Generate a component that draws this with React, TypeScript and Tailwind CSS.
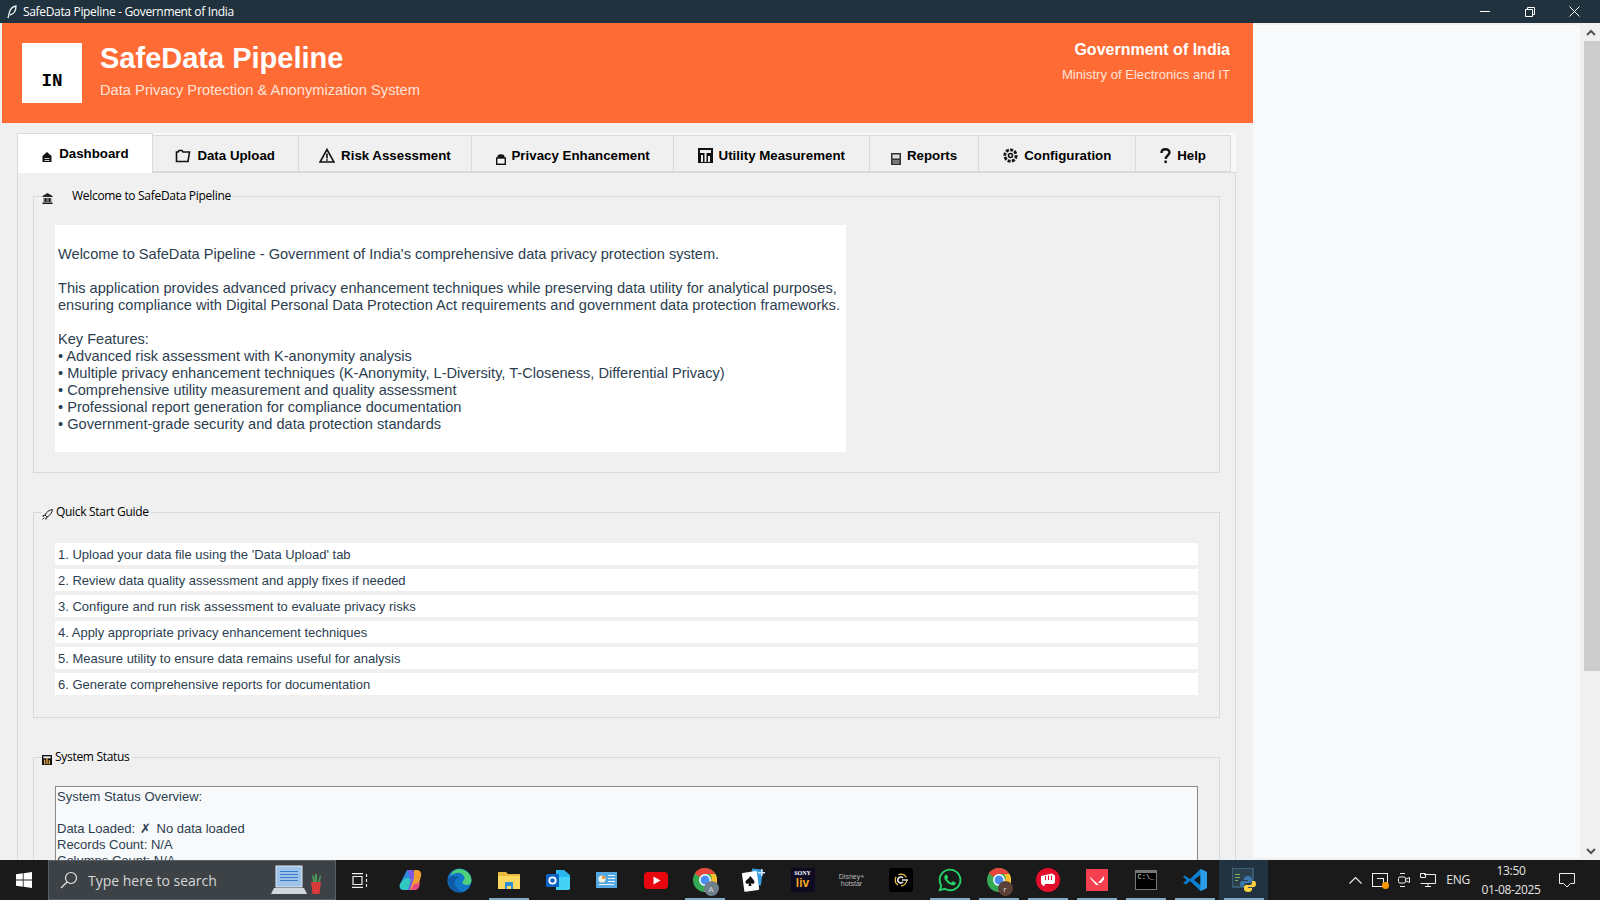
import React from "react";
import { FaWhatsapp } from "react-icons/fa";

const sans = "font-['Liberation_Sans',Arial,sans-serif]";

const HomeIcon = () => (
  <svg width="12" height="12" viewBox="0 0 12 12" className="mt-[7px]">
    <path d="M6 1 1.500 5v6h9V5z" fill="#111" />
    <path d="M3.500 7h5v1h-5zM3.500 9h5v1h-5z" fill="#ccc" />
  </svg>
);
const FolderIcon = () => (
  <svg width="16" height="14" viewBox="0 0 16 14" fill="none" stroke="#111" strokeWidth="1.600">
    <path d="M1.500 12.500V3h1.500l1-1.500h3L8 3h6.500l-1.500 9.500z" fill="#eee" />
  </svg>
);
const WarnIcon = () => (
  <svg width="16" height="15" viewBox="0 0 16 15" fill="none">
    <path d="M8 1.500 1 14h14z" stroke="#111" strokeWidth="1.600" />
    <path d="M7.200 5.500h1.600v5H7.200zM7.200 11.300h1.600v1.400H7.200z" fill="#111" />
  </svg>
);
const LockIcon = () => (
  <svg width="10" height="11" viewBox="0 0 10 11" className="mt-[7px]">
    <path d="M1.500 5V2.500C1.500 1 3 .3 5 .3s3.500.7 3.500 2.200V5z" fill="#111" />
    <rect x=".7" y="4" width="8.600" height="6.300" fill="#f4f4f4" stroke="#111" strokeWidth="1.400" />
  </svg>
);
const BarsIcon = ({ size = 15, bars = "#eee" }: { size?: number; bars?: string }) => (
  <svg width={size} height={size} viewBox="0 0 15 15">
    <rect width="15" height="15" fill="#111" />
    <path d="M2 2h11v3H2z" fill="#eee" />
    <path d="M3 7h2v7H3zM6.500 5h2v9h-2zM10 8h2v6h-2z" fill={bars} />
  </svg>
);
const ReportIcon = () => (
  <svg width="10" height="12" viewBox="0 0 10 12" className="mt-[6px]">
    <rect width="10" height="12" fill="#333" />
    <rect x="1.500" y="1.500" width="7" height="4" fill="#ddd" />
    <rect x="1.500" y="7" width="7" height="4" fill="#777" />
  </svg>
);
const GearIcon = () => (
  <svg width="15" height="15" viewBox="0 0 15 15" fill="none" stroke="#111">
    <circle cx="7.500" cy="7.500" r="5.700" strokeWidth="2.800" strokeDasharray="3 1.300" />
    <circle cx="7.500" cy="7.500" r="2" strokeWidth="1.600" />
  </svg>
);
const QuestionIcon = () => (
  <svg width="11" height="16" viewBox="0 0 11 16" fill="none" stroke="#111" strokeWidth="2.400">
    <path d="M1.500 5C1.500 2.500 3 1.200 5.500 1.200S9.500 2.600 9.500 4.600c0 2.600-3.500 3-3.800 6.200" />
    <path d="M5.600 12.500v2.600" />
  </svg>
);
const BankIcon = () => (
  <svg width="11" height="11" viewBox="0 0 11 11">
    <path d="M5.500 0 .5 3v1h10V3z" fill="#222" />
    <path d="M1.500 5h8v4h-8z" fill="#666" />
    <path d="M3 5h1v4H3zM7 5h1v4H7zM.5 9.500h10V11H.5z" fill="#111" />
  </svg>
);
const RocketIcon = () => (
  <svg width="11" height="11" viewBox="0 0 11 11" fill="none">
    <path d="M10.500.5C7 1 4.500 3 3 6l2 2c3-1.500 5-4 5.500-7.500z" fill="#eee" stroke="#222" />
    <path d="M3 6 .7 7l1 .7M5 8l-1 2.300-.7-1M2.300 8.700.5 10.500" stroke="#222" />
  </svg>
);

function Tab({ icon, label, width, active }: { icon: React.ReactNode; label: string; width: string; active?: boolean }) {
  return (
    <div
      className={
        active
          ? `${width} h-[40px] flex justify-center items-start gap-[6px] pt-[10px] bg-white border border-b-0 border-[#d9d9d9] text-[13.3px] font-bold text-black`
          : `${width} h-[37px] mt-[2px] pt-[4px] flex justify-center items-center gap-[6px] bg-[#f0f0f0] border-r border-t border-b border-[#d9d9d9] text-[13.3px] font-bold text-black`
      }
    >
      {icon}
      <span>{label}</span>
    </div>
  );
}

function Frame({ icon, title, titleLeft, children, className }: { icon: React.ReactNode; title: string; titleLeft: string; children: React.ReactNode; className: string }) {
  return (
    <section className={`relative border border-[#d9d9d9] ${className}`}>
      <div className="absolute -top-[10px] left-[8px] h-[18px] flex items-center bg-[#f0f0f0] font-['Open_Sans',sans-serif] text-[12px] text-black tracking-[-0.3px] pr-[2px]">
        <span className="pr-[3px] mt-[5px]">{icon}</span>
        <span className={titleLeft}>{title}</span>
      </div>
      {children}
    </section>
  );
}

const guide = [
  "1. Upload your data file using the 'Data Upload' tab",
  "2. Review data quality assessment and apply fixes if needed",
  "3. Configure and run risk assessment to evaluate privacy risks",
  "4. Apply appropriate privacy enhancement techniques",
  "5. Measure utility to ensure data remains useful for analysis",
  "6. Generate comprehensive reports for documentation",
];

const Copilot = () => (
  <svg width="24" height="24" viewBox="0 0 24 24">
    <path d="M8 2h5l-4 20H4C1 22 0 19 1 16z" fill="#2f8be0" />
    <path d="M8 2h6l3 4-5 16H8l3-14z" fill="#7c5be0" />
    <path d="M15 2h3c3 0 5 3 4 6l-3 11c-1 2-3 3-5 3h-3l4-12z" fill="#f0a030" />
    <path d="M12 22h4c2 0 3-1 4-3l1-4-6 1z" fill="#e84a7f" />
    <path d="M5 11c3-2 6-1 7 1l-3 10H5c-3 0-5-3-4-6z" fill="#2fc7c0" />
  </svg>
);
const Edge = () => (
  <svg width="25" height="25" viewBox="0 0 25 25">
    <circle cx="12.500" cy="12.500" r="12" fill="#1277c9" />
    <path d="M12 1c6 0 12 4 12.500 11 0 3-2 5-5 5-2 0-4-1-4-2.500C15.500 12 20 12 16 7 14 4 8 4 3 8c2-4 5-7 9-7z" fill="#4fd07a" />
    <path d="M1 11c2-3 8-5 11-1-3 0-5 3-4 7 1 3 4 6 8 7-8 2-15-5-15-13z" fill="#0e5aa5" />
  </svg>
);
const Explorer = () => (
  <svg width="22" height="20" viewBox="0 0 22 20">
    <path d="M0 2h8l2 2h12v15H0z" fill="#e9b83e" />
    <path d="M0 6h22v13H0z" fill="#fbd95f" />
    <path d="M7 12h8v7h-2v-3H9v3H7z" fill="#2e8fd8" />
  </svg>
);
const Outlook = () => (
  <svg width="24" height="22" viewBox="0 0 24 22">
    <path d="M10 1h8l6 5v13c0 1-1 2-2 2H10z" fill="#29b6ef" />
    <path d="M10 8h14v11c0 1-1 2-2 2H10z" fill="#43d2f5" />
    <rect y="5" width="13" height="13" rx="1" fill="#0c62c4" />
    <circle cx="6.500" cy="11.500" r="3.200" fill="none" stroke="#fff" strokeWidth="1.800" />
  </svg>
);
const Widget = () => (
  <svg width="21" height="16" viewBox="0 0 21 16">
    <rect width="21" height="16" fill="#56a8e0" />
    <circle cx="6" cy="7" r="3.500" fill="#f4f4e4" />
    <path d="M6 7V3.500A3.500 3.500 0 0 1 9.500 7z" fill="#e89a3a" />
    <path d="M12 3h7v1h-7zM12 6h7v1h-7zM12 9h7v1h-7zM3 12h15v1H3z" fill="#e8f4ff" />
  </svg>
);
const Youtube = () => (
  <svg width="24" height="17" viewBox="0 0 24 17">
    <rect width="24" height="17" rx="4" fill="#e8070f" />
    <path d="M9.500 4.500 16.500 8.500 9.500 12.500z" fill="#fff" />
  </svg>
);
const Chrome = ({ badge, badgeBg }: { badge: string; badgeBg: string }) => (
  <span className="relative block w-[24px] h-[24px]">
    <svg width="24" height="24" viewBox="0 0 24 24">
      <circle cx="12" cy="12" r="12" fill="#34a853" />
      <path d="M12 0a12 12 0 0 1 10.400 6H12a6 6 0 0 0-5.200 3L1.800 5.500A12 12 0 0 1 12 0z" fill="#e8453c" />
      <path d="M22.400 6A12 12 0 0 1 11 24l5.200-9A6 6 0 0 0 17 6z" fill="#fbc02d" />
      <circle cx="12" cy="12" r="5.200" fill="#4a8df0" stroke="#fff" strokeWidth="1.500" />
    </svg>
    <span className={`absolute -right-[2px] -bottom-[4px] w-[15px] h-[15px] rounded-full ${badgeBg} text-[8px] leading-[15px] text-center text-[#ddd] font-['Open_Sans',sans-serif]`}>{badge}</span>
  </span>
);
const Solitaire = () => (
  <svg width="23" height="24" viewBox="0 0 23 24">
    <rect x="9" y="1" width="11" height="16" rx="1" transform="rotate(8 14 9)" fill="#3b9be0" />
    <path d="M19 1h1.500v3H23v1.500h-2.500V8H19V5.500h-3V4h3z" fill="#cfe8ff" />
    <rect x="1" y="4" width="15" height="19" rx="1" transform="rotate(-8 8 13)" fill="#fff" />
    <path d="M8.500 8c2 3 4 4 4 6 0 2-2.500 2.500-3.500 1l.5 3h-3l.5-3c-1 1.500-3.500 1-3.500-1 0-2 3-3 5-6z" fill="#111" />
  </svg>
);
const Sony = () => (
  <span className="flex flex-col items-center w-[24px] h-[24px] bg-[#0d0a22] pt-[2px]">
    <span className="font-['Liberation_Serif',serif] font-bold text-[6px] leading-[7px] text-white">SONY</span>
    <span className="font-['Liberation_Sans',sans-serif] font-bold text-[12px] leading-[13px] text-[#f5a623]">liv</span>
  </span>
);
const Disney = () => (
  <span className="flex flex-col items-center w-[24px] font-['Liberation_Sans',sans-serif] text-[7px] leading-[7px] text-[#b8b8b8]">
    <span>Disney+</span>
    <span>hotstar</span>
  </span>
);
const CApp = () => (
  <span className="flex items-center justify-center w-[24px] h-[24px] rounded-[3px] bg-black">
    <svg width="14" height="14" viewBox="0 0 14 14" fill="none">
      <circle cx="7" cy="7" r="5.800" stroke="#e8c34a" strokeWidth="1.200" strokeDasharray="9 3" />
      <path d="M9 5a3 3 0 1 0 0 4" stroke="#eee" strokeWidth="1.600" />
      <path d="M8 7h6" stroke="#eee" strokeWidth="1.400" />
    </svg>
  </span>
);
const Riot = () => (
  <svg width="24" height="24" viewBox="0 0 24 24">
    <circle cx="12" cy="12" r="12" fill="#e40d2d" />
    <path d="M5 8l11-2.500 3 2V15l-2 1H9l-1 2.500-3-3z" fill="#fff" />
    <path d="M9.500 8v4M12.500 7.500v4.500M15.500 7.500V12" stroke="#e40d2d" strokeWidth="1" />
  </svg>
);
const Valorant = () => (
  <svg width="22" height="22" viewBox="0 0 22 22">
    <rect width="22" height="22" fill="#f5414f" />
    <path d="M4 8v1l6 7h3zM18 7l-6 7h3l3-3.500z" fill="#fff" />
  </svg>
);
const Cmd = () => (
  <span className="block w-[22px] h-[20px] bg-black border border-[#777] border-t-[3px] pl-[2px] text-[7px] leading-[9px] text-[#ddd] font-['Liberation_Mono',monospace]">C:\_</span>
);
const VSCode = () => (
  <svg width="24" height="24" viewBox="0 0 24 24">
    <path d="M17.500 1 24 4v16l-6.500 3L7 13l-4 3.500L0 15l4-3-4-3 1.500-1.500L7 11z" fill="#0a7ed0" />
    <path d="M17.500 7v10L11 12z" fill="#1a1a1a" />
    <path d="M17.500 1 24 4v16l-6.500 3z" fill="#2b9ee8" />
  </svg>
);
const PyIdle = () => (
  <span className="relative block w-[24px] h-[24px]">
    <svg width="22" height="20" viewBox="0 0 22 20" className="absolute left-0 top-0">
      <rect width="21" height="19" fill="#2b3f4d" stroke="#4b7fa0" />
      <path d="M3 6h5v1H3zM3 9h5v1H3zM3 12h3v1H3z" fill="#7ab15a" />
    </svg>
    <svg width="16" height="16" viewBox="0 0 16 16" className="absolute right-0 bottom-0">
      <path d="M8 0c-3 0-4 1-4 3v1h4v1H2C1 5 0 6 0 8s1 3 2 3h2V9c0-1 1-2 2-2h4c1 0 2-1 2-2V3c0-2-2-3-4-3z" fill="#3b78ad" />
      <path d="M8 16c3 0 4-1 4-3v-1H8v-1h6c1 0 2-1 2-3s-1-3-2-3h-2v2c0 1-1 2-2 2H6c-1 0-2 1-2 2v2c0 2 2 3 4 3z" fill="#fdd23e" />
    </svg>
  </span>
);

const taskIcons: { node: React.ReactNode; open?: boolean; active?: boolean }[] = [
  { node: <Copilot /> },
  { node: <Edge /> },
  { node: <Explorer />, open: true },
  { node: <Outlook /> },
  { node: <Widget /> },
  { node: <Youtube /> },
  { node: <Chrome badge="A" badgeBg="bg-[#6f7f8c]" />, open: true },
  { node: <Solitaire /> },
  { node: <Sony /> },
  { node: <Disney /> },
  { node: <CApp /> },
  { node: <FaWhatsapp className="text-[26px] text-[#25d366]" />, open: true },
  { node: <Chrome badge="r" badgeBg="bg-[#5a4038]" />, open: true },
  { node: <Riot />, open: true },
  { node: <Valorant />, open: true },
  { node: <Cmd />, open: true },
  { node: <VSCode />, open: true },
  { node: <PyIdle />, open: true, active: true },
];

export default function App() {
  return (
    <div className={`w-[1600px] h-[900px] flex flex-col overflow-hidden bg-[#f0f0f0] ${sans}`}>
      {/* title bar */}
      <div className="h-[23px] shrink-0 flex items-center bg-[#1f323e] text-white">
        <svg width="10" height="14" viewBox="0 0 10 14" className="ml-[7px] mr-[6px]" fill="none">
          <path d="M1 13 2.500 7C3.500 3.500 6 1.500 9 1c0 4-2 8-6 9" stroke="#e8eef2" strokeWidth="1.300" />
        </svg>
        <span className="font-['Open_Sans',sans-serif] text-[12px] tracking-[-0.33px]">SafeData Pipeline - Government of India</span>
        <div className="ml-auto flex items-center h-full pr-[3px]">
          <div className="w-[45px] flex justify-center">
            <span className="block w-[10px] h-[1px] bg-white" />
          </div>
          <div className="w-[45px] flex justify-center">
            <svg width="10" height="10" viewBox="0 0 10 10" fill="none" stroke="#fff">
              <path d="M.5 2.500h7v7h-7zM2.500 2.500v-2h7v7h-2" />
            </svg>
          </div>
          <div className="w-[45px] flex justify-center">
            <svg width="11" height="11" viewBox="0 0 11 11" stroke="#fff">
              <path d="M.5.5l10 10M10.500.5l-10 10" />
            </svg>
          </div>
        </div>
      </div>

      {/* window body */}
      <div className="flex-1 min-h-0 flex">
        <main className="w-[1253px] shrink-0 overflow-hidden pl-[2px]">
          <header className="h-[100px] bg-[#ff6b35] flex pl-[20px] pr-[23px] pt-[20px] text-white">
            <div className="w-[60px] h-[60px] bg-white flex items-center justify-center pt-[17px] font-['Liberation_Mono',monospace] font-bold text-[17.500px] text-black">IN</div>
            <div className="ml-[18px] -mt-[4px]">
              <div className="text-[29px] leading-[38px] font-bold">SafeData Pipeline</div>
              <div className="text-[14.700px] leading-[20px] mt-[3px] text-[#ffe3d8]">Data Privacy Protection &amp; Anonymization System</div>
            </div>
            <div className="ml-auto text-right">
              <div className="text-[16px] leading-[20px] font-bold -mt-[3px]">Government of India</div>
              <div className="text-[13.100px] leading-[16px] mt-[7px] text-[#ffe3d8]">Ministry of Electronics and IT</div>
            </div>
          </header>

          <div className="ml-[15px] w-[1219px] mt-[10px]">
            <div className="flex h-[40px] bg-[#f8f8f8] pr-[5px]">
              <Tab active width="w-[136px]" icon={<HomeIcon />} label="Dashboard" />
              <Tab width="w-[146px]" icon={<FolderIcon />} label="Data Upload" />
              <Tab width="w-[174px]" icon={<WarnIcon />} label="Risk Assessment" />
              <Tab width="w-[202px]" icon={<LockIcon />} label="Privacy Enhancement" />
              <Tab width="w-[196px]" icon={<BarsIcon />} label="Utility Measurement" />
              <Tab width="w-[110px]" icon={<ReportIcon />} label="Reports" />
              <Tab width="w-[157px]" icon={<GearIcon />} label="Configuration" />
              <Tab width="w-[95px]" icon={<QuestionIcon />} label="Help" />
            </div>
            <div className="h-[700px] -mt-[1px] border border-[#d9d9d9] px-[15px] pt-[23px]">
              <Frame
                className="h-[277px] pl-[21px] pt-[28px]"
                icon={<BankIcon />}
                title="Welcome to SafeData Pipeline"
                titleLeft="ml-[16px]"
              >
                <div className="w-[791px] h-[227px] bg-white px-[3px] pt-[21px] text-[14.600px] leading-[17px] text-[#2c3e50] whitespace-pre">
                  {`Welcome to SafeData Pipeline - Government of India's comprehensive data privacy protection system.

This application provides advanced privacy enhancement techniques while preserving data utility for analytical purposes,
ensuring compliance with Digital Personal Data Protection Act requirements and government data protection frameworks.

Key Features:
• Advanced risk assessment with K-anonymity analysis
• Multiple privacy enhancement techniques (K-Anonymity, L-Diversity, T-Closeness, Differential Privacy)
• Comprehensive utility measurement and quality assessment
• Professional report generation for compliance documentation
• Government-grade security and data protection standards`}
                </div>
              </Frame>

              <Frame
                className="h-[206px] mt-[39px] pl-[21px] pr-[21px] pt-[30px]"
                icon={<RocketIcon />}
                title="Quick Start Guide"
                titleLeft=""
              >
                <div className="flex flex-col gap-[4px]">
                  {guide.map((line) => (
                    <div key={line} className="h-[22px] bg-white pl-[3px] pt-[2px] flex items-center text-[13px] text-[#2c3e50]">
                      {line}
                    </div>
                  ))}
                </div>
              </Frame>

              <Frame
                className="h-[200px] mt-[39px] pl-[21px] pr-[21px] pt-[28px]"
                icon={<BarsIcon size={10} bars="#e8b04a" />}
                title="System Status"
                titleLeft=""
              >
                <div className="h-[120px] bg-[#f8f9fa] border border-[#8a8a8a] px-[1px] pt-[2px] text-[13px] leading-[16px] text-[#2c3e50] whitespace-pre">
                  {"System Status Overview:\n\nData Loaded:  "}
                  <span className="inline-block -ml-[2px] -mr-[2px]">✗</span>
                  {"  No data loaded\nRecords Count: N/A\nColumns Count: N/A"}
                </div>
              </Frame>
            </div>
          </div>
        </main>

        <div className="flex-1 mt-[2px] mb-[2px] bg-[#f8f9fa]" />
        <div className="w-[18px] ml-[2px] shrink-0 flex flex-col bg-[#f0f0f0]">
          <div className="h-[18px] flex items-center justify-center">
            <svg width="10" height="7" viewBox="0 0 10 7" fill="none" stroke="#555" strokeWidth="2">
              <path d="M1 6l4-4 4 4" />
            </svg>
          </div>
          <div className="h-[630px] ml-[2px] bg-[#cdcdcd]" />
          <div className="mt-auto h-[18px] flex items-center justify-center">
            <svg width="10" height="7" viewBox="0 0 10 7" fill="none" stroke="#555" strokeWidth="2">
              <path d="M1 1l4 4 4-4" />
            </svg>
          </div>
        </div>
      </div>

      {/* windows taskbar */}
      <footer className="h-[40px] shrink-0 flex items-stretch bg-[#1a1a1a] text-[#e8e8e8] font-['Open_Sans',sans-serif]">
        <div className="w-[48px] flex items-center justify-center">
          <svg width="16" height="16" viewBox="0 0 16 16" fill="#fff">
            <path d="M0 2.300 6.800 1.300v6.300H0zM7.600 1.200 16 0v7.600H7.600zM0 8.400h6.800v6.300L0 13.700zM7.600 8.400H16V16l-8.400-1.200z" />
          </svg>
        </div>
        <div className="w-[288px] flex items-center bg-[#3d4247] border border-[#5a5f64] pl-[11px]">
          <svg width="18" height="18" viewBox="0 0 18 18" fill="none" stroke="#e8e8e8" strokeWidth="1.200">
            <circle cx="11" cy="7" r="5.500" />
            <path d="M7 11 1 17" />
          </svg>
          <span className="ml-[10px] text-[14px] text-[#d6d6d6]">Type here to search</span>
          <div className="ml-auto mr-[13px] flex items-end gap-[3px]">
            <svg width="36" height="30" viewBox="0 0 36 30">
              <rect x="5" y="1" width="26" height="21" fill="#9fc4ea" stroke="#dfe8f2" />
              <path d="M9 6h18v1H9zM9 9h18v1H9zM9 12h18v1H9zM9 15h18v1H9z" fill="#3a78c8" />
              <path d="M3 23h30l3 6H0z" fill="#d3d8e0" />
            </svg>
            <svg width="12" height="21" viewBox="0 0 12 21">
              <path d="M3 8 2 1l2 1 1 6zM5 8V0h2v8zM8 8l2-7 1 1-1 6z" fill="#4a9a5a" />
              <path d="M1 8h10l-1.500 12h-7z" fill="#d93a3a" />
            </svg>
          </div>
        </div>
        <div className="w-[48px] flex items-center justify-center">
          <svg width="16" height="15" viewBox="0 0 16 15" fill="none" stroke="#eee" strokeWidth="1.200">
            <path d="M0 .6h11M0 14.400h11M1 3.500h9v8H1zM14.500 1v3M14.500 6v3M14.500 11v3" />
          </svg>
        </div>
        <div className="flex ml-[2px]">
          {taskIcons.map((t, i) => (
            <div key={i} className={`relative w-[49px] flex items-center justify-center ${t.active ? "bg-[#213340]" : ""}`}>
              {t.node}
              {t.open && <span className="absolute bottom-0 left-[5px] right-[4px] h-[2px] bg-[#7fa9c4]" />}
            </div>
          ))}
        </div>
        <div className="flex-1 flex items-center justify-end text-[12px] text-[#e4e4e4]">
          <svg width="13" height="8" viewBox="0 0 13 8" fill="none" stroke="#eee" strokeWidth="1.200" className="mr-[10px]">
            <path d="M.5 7.500 6.500 1.500l6 6" />
          </svg>
          <span className="relative flex items-center justify-center w-[16px] h-[14px] mr-[10px] border border-[#eee]">
            <span className="block w-[7px] h-[5px] border-t border-r border-[#eee]" />
            <span className="absolute -right-[2px] -bottom-[3px] w-[7px] h-[7px] rounded-full bg-[#ff9800]" />
          </span>
          <svg width="12" height="16" viewBox="0 0 12 16" fill="none" stroke="#eee" className="mr-[10px]">
            <rect x=".5" y="5" width="7" height="6" rx="1.500" />
            <path d="M8 7l3.500-1.500v5L8 9M2 1.500h5M2 14.500h5" />
          </svg>
          <svg width="16" height="14" viewBox="0 0 16 14" fill="none" stroke="#eee" className="mr-[10px]">
            <path d="M4 1.500h11.500v9H.5M8 10.500v3M5 13.500h6M.5 .5h5v4h-5z" />
          </svg>
          <span className="mr-[10px] tracking-[-0.2px]">ENG</span>
          <div className="w-[62px] flex flex-col items-center leading-[19px] mr-[17px] tracking-[-0.35px]">
            <span>13:50</span>
            <span>01-08-2025</span>
          </div>
          <svg width="16" height="15" viewBox="0 0 16 15" fill="none" stroke="#eee" className="mr-[25px]">
            <path d="M.5.500h15v10h-4l-3.500 3.500-3.500-3.500h-4z" />
          </svg>
        </div>
      </footer>
    </div>
  );
}
